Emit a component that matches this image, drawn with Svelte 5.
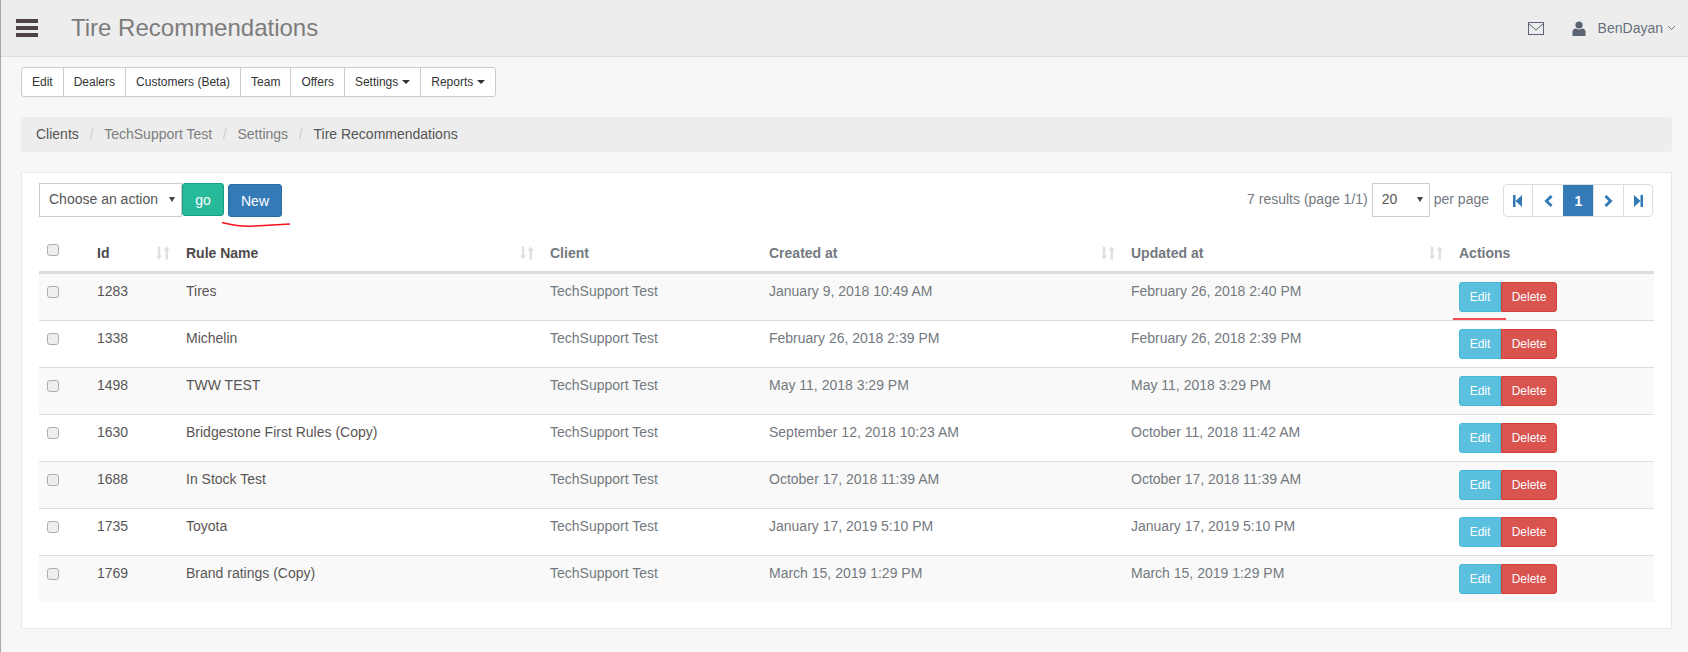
<script>
  const tabs = [
    { label: 'Edit' },
    { label: 'Dealers' },
    { label: 'Customers (Beta)' },
    { label: 'Team' },
    { label: 'Offers' },
    { label: 'Settings', caret: true },
    { label: 'Reports', caret: true }
  ]

  const columns = [
    { label: 'Id', sort: true },
    { label: 'Rule Name', sort: true },
    { label: 'Client', dim: true },
    { label: 'Created at', sort: true, dim: true },
    { label: 'Updated at', sort: true, dim: true },
    { label: 'Actions', dim: true }
  ]

  const rows = [
    [1283, 'Tires', 'January 9, 2018 10:49 AM', 'February 26, 2018 2:40 PM'],
    [1338, 'Michelin', 'February 26, 2018 2:39 PM', 'February 26, 2018 2:39 PM'],
    [1498, 'TWW TEST', 'May 11, 2018 3:29 PM', 'May 11, 2018 3:29 PM'],
    [1630, 'Bridgestone First Rules (Copy)', 'September 12, 2018 10:23 AM', 'October 11, 2018 11:42 AM'],
    [1688, 'In Stock Test', 'October 17, 2018 11:39 AM', 'October 17, 2018 11:39 AM'],
    [1735, 'Toyota', 'January 17, 2019 5:10 PM', 'January 17, 2019 5:10 PM'],
    [1769, 'Brand ratings (Copy)', 'March 15, 2019 1:29 PM', 'March 15, 2019 1:29 PM']
  ]
</script>

<div class="page">
  <header class="topbar">
    <div class="burger"><span></span><span></span><span></span></div>
    <h1>Tire Recommendations</h1>
    <div class="user">
      <svg class="mail" width="16" height="13" viewBox="0 0 16 13">
        <rect x="0.5" y="0.5" width="15" height="12" fill="none" stroke="#5a6472" />
        <path d="M1 2 L8 8 L15 2" fill="none" stroke="#5a6472" />
      </svg>
      <svg class="person" width="14" height="15" viewBox="0 0 14 15">
        <circle cx="7" cy="4" r="3.6" fill="#5a6472" />
        <path d="M0.5 15 V10.5 Q0.5 7.8 4 7.4 Q7 9.4 10 7.4 Q13.5 7.8 13.5 10.5 V15 Z" fill="#5a6472" />
      </svg>
      <span class="name">BenDayan</span>
      <svg width="9" height="6" viewBox="0 0 9 6">
        <path d="M1 1 L4.5 4.5 L8 1" fill="none" stroke="#6b7480" />
      </svg>
    </div>
  </header>

  <main>
    <nav class="tabs">
      {#each tabs as t}
        <a href="#top">{t.label}{#if t.caret}<i class="caret"></i>{/if}</a>
      {/each}
    </nav>

    <ol class="crumbs">
      <li class="dark">Clients</li>
      <li>TechSupport Test</li>
      <li>Settings</li>
      <li class="dark last">Tire Recommendations</li>
    </ol>

    <section class="panel">
      <div class="controls">
        <div class="actions-form">
          <div class="select action-select">Choose an action</div>
          <button class="go">go</button>
          <button class="new">New</button>
        </div>
        <div class="paging">
          <span>7 results (page 1/1)</span>
          <div class="select size-select">20</div>
          <span class="per">per page</span>
          <div class="pager">
            <a href="#top">
              <svg width="10" height="12" viewBox="0 0 10 12"><path d="M0 0 H2.5 V12 H0 Z M2.5 6 L9 0 V12 Z" /></svg>
            </a>
            <a href="#top">
              <svg width="9" height="12" viewBox="0 0 9 12"><path d="M6.5 0 L8.6 2 L4.4 6 L8.6 10 L6.5 12 L0.4 6 Z" /></svg>
            </a>
            <a href="#top" class="on">1</a>
            <a href="#top">
              <svg width="9" height="12" viewBox="0 0 9 12"><path d="M2.5 0 L0.4 2 L4.6 6 L0.4 10 L2.5 12 L8.6 6 Z" /></svg>
            </a>
            <a href="#top">
              <svg width="10" height="12" viewBox="0 0 10 12"><path d="M10 0 H7.5 V12 H10 Z M7.5 6 L1 0 V12 Z" /></svg>
            </a>
          </div>
        </div>
      </div>

      <table>
        <colgroup>
          <col style="width:50px" />
          <col style="width:89px" />
          <col style="width:364px" />
          <col style="width:219px" />
          <col style="width:362px" />
          <col style="width:328px" />
          <col />
        </colgroup>
        <thead>
          <tr>
            <th><span class="check head"></span></th>
            {#each columns as c}
              <th class:dim={c.dim}>
                {c.label}
                {#if c.sort}
                  <svg class="sort" width="14" height="14" viewBox="0 0 15 14">
                    <path d="M3.2 14 L0 9.6 H2 V0 H4.6 V9.6 H6.6 Z M11.4 0 L14.8 4.4 H12.8 V14 H10.2 V4.4 H8 Z" fill="#dfdfdf" />
                  </svg>
                {/if}
              </th>
            {/each}
          </tr>
        </thead>
        <tbody>
          {#each rows as r}
            <tr>
              <td><span class="check"></span></td>
              <td class="strong">{r[0]}</td>
              <td class="strong">{r[1]}</td>
              <td>TechSupport Test</td>
              <td>{r[2]}</td>
              <td>{r[3]}</td>
              <td class="btns">
                <button class="edit">Edit</button><button class="delete">Delete</button>
              </td>
            </tr>
          {/each}
        </tbody>
      </table>
    </section>
  </main>

  <!-- hand drawn marks on the screenshot -->
  <svg class="marks" width="1688" height="652" viewBox="0 0 1688 652">
    <path d="M222 222.5 Q238 227 255 226 T290 224" fill="none" stroke="#f5101c" stroke-width="1.4" />
    <path d="M1453 319 H1506" fill="none" stroke="#f5101c" stroke-width="1.6" />
  </svg>
</div>

<style>
  :global(body) {
    margin: 0;
    background: #f7f7f7;
  }

  .page {
    position: relative;
    height: 652px;
    overflow: hidden;
    border-left: 1px solid #a9a9a9;
    box-sizing: border-box;
    font-family: "Liberation Sans", Arial, sans-serif;
    font-size: 14px;
    color: #73797f;
  }

  .topbar {
    display: flex;
    align-items: center;
    height: 56px;
    background: #ededed;
    border-bottom: 1px solid #d9dee4;
  }

  .burger {
    display: flex;
    flex-direction: column;
    gap: 3px;
    margin-left: 15px;
    width: 22px;
  }

  .burger span {
    height: 4px;
    background: #4f4444;
  }

  h1 {
    margin: 0 0 0 33px;
    font-size: 24px;
    font-weight: 400;
    color: #7c7c7c;
  }

  .user {
    display: flex;
    align-items: center;
    margin-left: auto;
    margin-right: 12px;
    color: #66707c;
    font-size: 14px;
  }

  .mail {
    margin-right: 28px;
  }

  .person {
    margin-right: 12px;
  }

  .name {
    margin-right: 4px;
  }

  main {
    padding: 10px 16px 0 20px;
  }

  .tabs {
    display: inline-flex;
    height: 30px;
    background: #fff;
    border: 1px solid #ccc;
    border-radius: 3px;
    box-sizing: border-box;
    font-size: 12px;
  }

  .tabs a {
    display: flex;
    align-items: center;
    padding: 0 10px;
    color: #333;
    text-decoration: none;
    border-left: 1px solid #ccc;
  }

  .tabs a:first-child {
    border-left: none;
  }

  .caret {
    display: inline-block;
    margin-left: 4px;
    border-top: 4px solid #333;
    border-left: 4px solid transparent;
    border-right: 4px solid transparent;
  }

  .crumbs {
    display: flex;
    align-items: center;
    list-style: none;
    height: 35px;
    box-sizing: border-box;
    margin: 20px 0;
    padding: 0 15px 1px;
    background: #ededed;
    border-radius: 4px;
    color: #7e7e7e;
    font-size: 14px;
  }

  .crumbs li:not(.last)::after {
    content: '/';
    padding: 0 10.75px;
    color: #ccc;
  }

  .crumbs .dark {
    color: #555;
  }

  .panel {
    height: 457px;
    box-sizing: border-box;
    padding: 10px 17px 0;
    background: #fff;
    border: 1px solid #e6e9ed;
  }

  .controls {
    display: flex;
    justify-content: space-between;
    align-items: flex-start;
    height: 46px;
  }

  .actions-form {
    display: flex;
    align-items: flex-start;
  }

  .select {
    position: relative;
    box-sizing: border-box;
    height: 34px;
    line-height: 31px;
    padding-left: 9px;
    background: #fff;
    border: 1px solid #ccc;
    color: #555;
    font-size: 14px;
  }

  .select::after {
    content: '';
    position: absolute;
    right: 6px;
    top: 13px;
    border-top: 5px solid #444;
    border-left: 3.5px solid transparent;
    border-right: 3.5px solid transparent;
  }

  .action-select {
    width: 143px;
  }

  .size-select {
    width: 58px;
    margin: 0 4px;
  }

  button {
    font-family: inherit;
    color: #fff;
    cursor: pointer;
  }

  .go {
    height: 33px;
    width: 42px;
    padding: 0;
    background: #26b99a;
    border: 1px solid #169f85;
    border-radius: 3px;
    font-size: 14px;
  }

  .new {
    height: 33px;
    width: 54px;
    margin: 1px 0 0 4px;
    padding: 0;
    background: #337ab7;
    border: 1px solid #2e6da4;
    border-radius: 3px;
    font-size: 14px;
  }

  .paging {
    display: flex;
    align-items: flex-start;
    margin-right: 1px;
    line-height: 32px;
    font-size: 14px;
  }

  .per {
    margin-right: 14px;
  }

  .pager {
    display: flex;
    margin-top: 1px;
    height: 33px;
    background: #fff;
    border: 1px solid #ddd;
    border-radius: 4px;
    box-sizing: border-box;
  }

  .pager a {
    display: flex;
    align-items: center;
    justify-content: center;
    width: 29px;
    border-left: 1px solid #ddd;
    color: #fff;
    font-weight: 700;
    text-decoration: none;
  }

  .pager a:first-child {
    width: 28px;
    border-left: none;
  }

  .pager a:nth-child(2) {
    width: 30px;
  }

  .pager a:last-child {
    width: 28px;
  }

  .pager svg {
    fill: #337ab7;
  }

  .pager .on {
    background: #337ab7;
    border-left-color: #337ab7;
  }

  table {
    width: 100%;
    table-layout: fixed;
    border-collapse: collapse;
  }

  th {
    position: relative;
    height: 43px;
    box-sizing: border-box;
    padding: 6px 8px 0;
    text-align: left;
    font-size: 14px;
    font-weight: 700;
    color: #4f4a4a;
    border-bottom: 3px solid #ddd;
  }

  th.dim {
    color: #73797f;
  }

  .sort {
    position: absolute;
    right: 8px;
    top: 17px;
  }

  td {
    height: 47px;
    box-sizing: border-box;
    padding: 8px;
    vertical-align: top;
    line-height: 18px;
    border-bottom: 1px solid #ddd;
  }

  tbody tr:nth-child(odd) {
    background: #f9f9f9;
  }

  tbody tr:last-child td {
    border-bottom: none;
  }

  .strong {
    color: #5a5555;
  }

  .check {
    display: block;
    box-sizing: border-box;
    width: 12px;
    height: 12px;
    margin: 4px 0 0;
    background: #eeeeee;
    border: 1px solid #adadad;
    border-radius: 3px;
  }

  th .check {
    margin: -5px 0 0;
  }

  .btns {
    font-size: 0;
  }

  .btns button {
    height: 30px;
    padding: 0;
    font-size: 12px;
  }

  .edit {
    width: 42px;
    background: #5bc0de;
    border: 1px solid #46b8da;
    border-radius: 3px 0 0 3px;
  }

  .delete {
    width: 56px;
    background: #d9534f;
    border: 1px solid #d43f3a;
    border-radius: 0 3px 3px 0;
  }

  .marks {
    position: absolute;
    left: -1px;
    top: 0;
    pointer-events: none;
  }
</style>
